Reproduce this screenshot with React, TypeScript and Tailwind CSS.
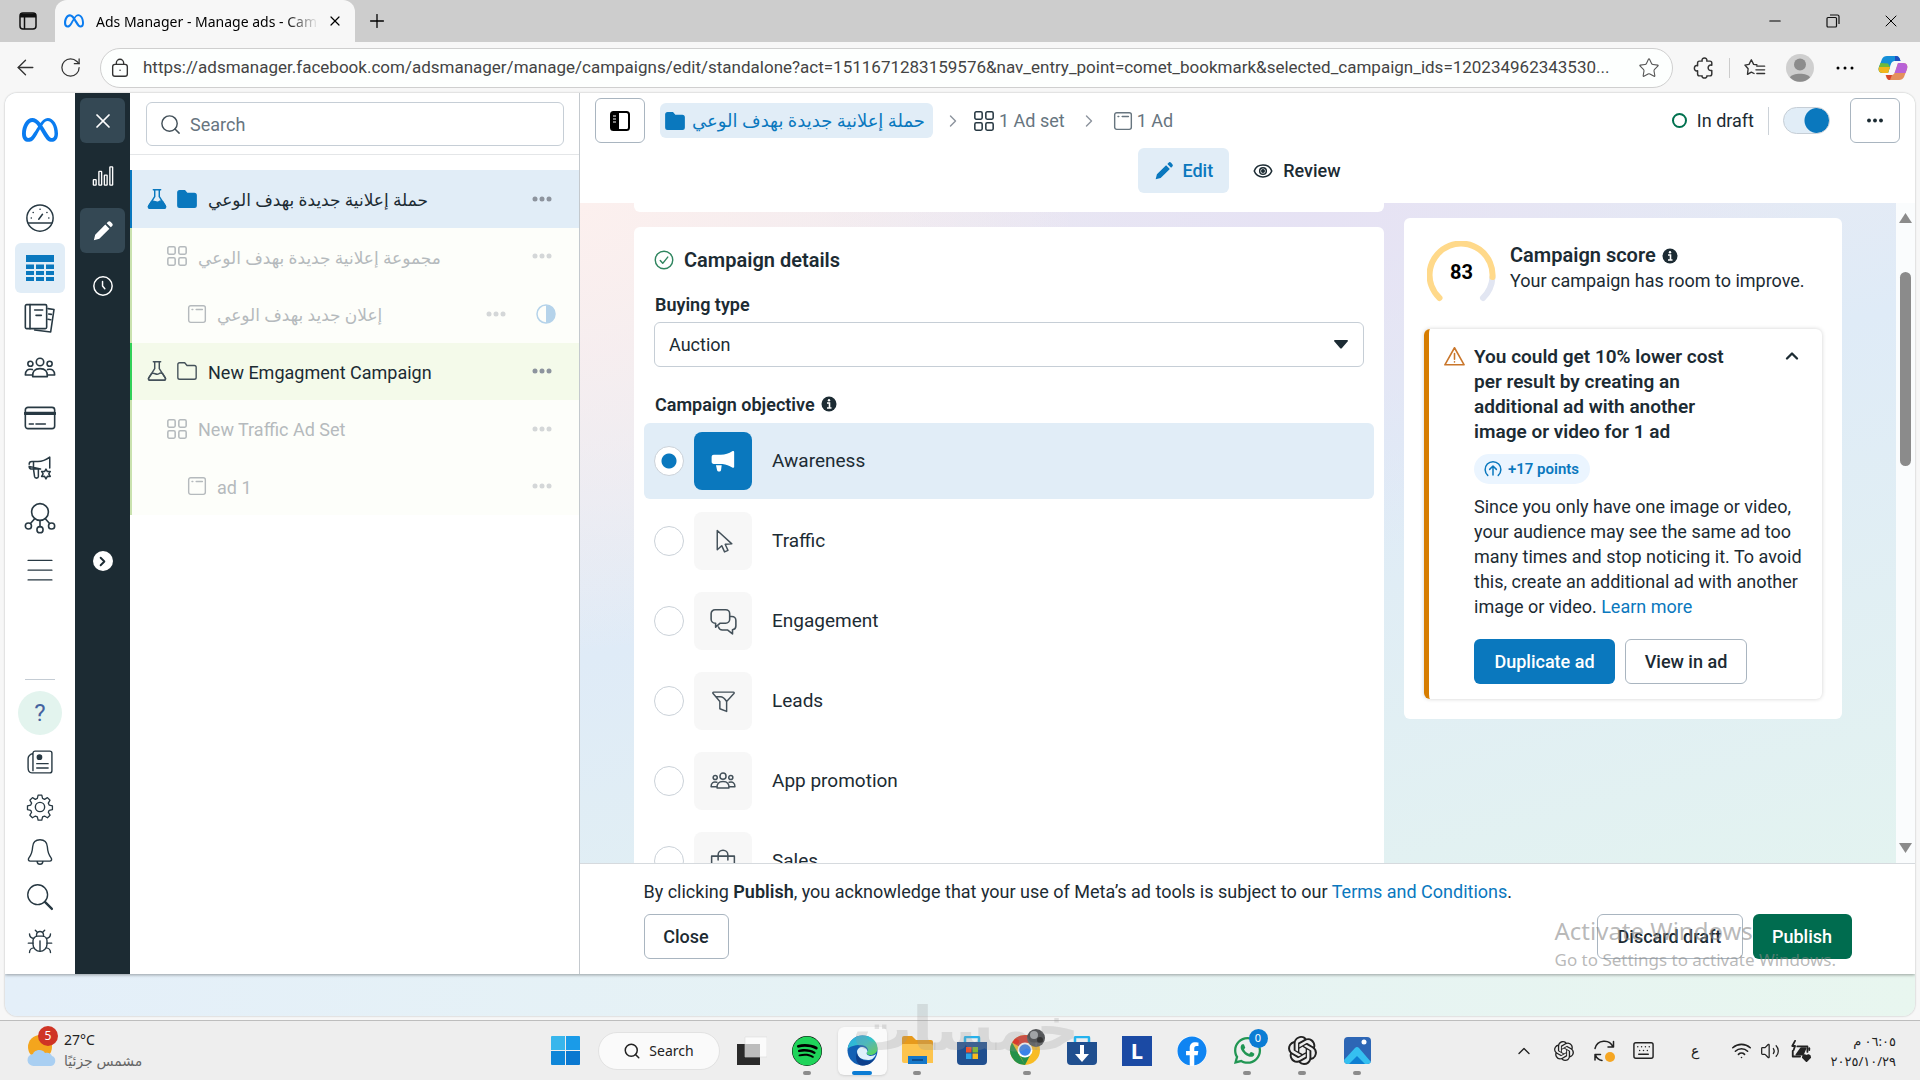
import type { ReactNode } from "react";
import { FaFacebook, FaSpotify, FaWhatsapp } from "react-icons/fa";
import { FaMeta } from "react-icons/fa6";
import { SiOpenai } from "react-icons/si";
import {
    ArrowLeft, Bug, ChevronRight, ChevronUp, Keyboard, Minus, Plus, RotateCw,
    Search, Star, Volume2, Wifi, X,
} from "lucide-react";

const appFont = "font-[Roboto,'DejaVu_Sans',sans-serif]";
const uiFont = "font-['Noto_Sans','DejaVu_Sans',sans-serif]";

function Line({ size = 24, width = 1.3, className = "", children }: { size?: number; width?: number; className?: string; children: ReactNode }) {
    return (
        <svg width={size} height={size} viewBox="0 0 24 24" fill="none" stroke="currentColor" strokeWidth={width} strokeLinecap="round" strokeLinejoin="round" className={`shrink-0 ${className}`} aria-hidden="true">
            {children}
        </svg>
    );
}

function Dots({ className = "" }: { className?: string }) {
    return (
        <svg width="20" height="6" viewBox="0 0 20 6" fill="currentColor" className={`shrink-0 ${className}`} aria-hidden="true">
            <circle cx="3" cy="3" r="2.5" />
            <circle cx="10" cy="3" r="2.5" />
            <circle cx="17" cy="3" r="2.5" />
        </svg>
    );
}

function PeopleIcon({ size, width }: { size: number; width?: number }) {
    return (
        <Line size={size} width={width}>
            <circle cx="12" cy="7.5" r="2.8" />
            <circle cx="4.8" cy="8.8" r="1.9" />
            <circle cx="19.2" cy="8.8" r="1.9" />
            <path d="M6.5 18.5c-.4-3.800 1.500-6 5.500-6s5.900 2.200 5.500 6z" />
            <path d="M6.300 13.200C3 12.300 1 13.800 1 17.300h5" />
            <path d="M17.700 13.200c3.300-.9 5.300.6 5.300 4.100h-5" />
        </Line>
    );
}

function GridIcon({ className = "" }: { className?: string }) {
    return (
        <Line size={22} width={1.7} className={className}>
            <rect x="2" y="2" width="8" height="8" rx="1.5" />
            <rect x="14" y="2" width="8" height="8" rx="1.5" />
            <rect x="2" y="14" width="8" height="8" rx="1.5" />
            <rect x="14" y="14" width="8" height="8" rx="1.5" />
        </Line>
    );
}

function AdIcon({ className = "" }: { className?: string }) {
    return (
        <Line size={20} width={1.7} className={className}>
            <rect x="2" y="2" width="20" height="20" rx="2.500" />
            <path d="M6 6.500h1M11 6.500h7.500" />
        </Line>
    );
}

function FolderIcon({ filled = false, className = "" }: { filled?: boolean; className?: string }) {
    return (
        <Line size={22} width={1.5} className={className}>
            <path d="M2 5a2 2 0 0 1 2-2h5.500l2.500 3h8a2 2 0 0 1 2 2v11a2 2 0 0 1-2 2H4a2 2 0 0 1-2-2z" fill={filled ? "currentColor" : "none"} />
        </Line>
    );
}

function FlaskIcon({ filled = false }: { filled?: boolean }) {
    return (
        <Line size={22} width={1.600}>
            <path d="M8 2h8M9.500 2v7.500L3 19.500c-.8 1.500 0 2.500 1.500 2.500h15c1.500 0 2.300-1 1.500-2.500L14.500 9.500V2" />
            <path d="M6 15c3-2 5 2 8 0 1.500-1 3-.8 4.200 0l2.800 4.500c.8 1.500 0 2.500-1.500 2.500h-15C3 22 2.200 21 3 19.500z" fill={filled ? "currentColor" : "none"} />
        </Line>
    );
}

function PencilIcon({ size = 22 }: { size?: number }) {
    return (
        <svg width={size} height={size} viewBox="0 0 24 24" fill="currentColor" aria-hidden="true">
            <path d="M2 22l1.500-6L14.500 5l4.500 4.500L8 20.500zM16 3.500l1.500-1.500c1-1 2-.8 3 .2l1.300 1.300c1 1 1.200 2 .2 3L20.500 8z" />
        </svg>
    );
}

function MegaphoneIcon() {
    return (
        <svg width="26" height="26" viewBox="0 0 24 24" fill="currentColor" aria-hidden="true">
            <path d="M1.500 8.500C1.500 7 2.300 6.300 3.500 6.300H10c4 0 7.500-1.300 10.500-3.300.9-.6 1.800-.2 1.800.8v13.400c0 1-.9 1.400-1.800.8-2.700-1.800-5.700-3-9-3.300v.1H3.500c-1.200 0-2-.8-2-2zM5.500 16h5.300l-.6 4.200c-.2 1-.9 1.600-1.800 1.600s-1.700-.6-1.900-1.600z" />
        </svg>
    );
}

function InfoIcon() {
    return (
        <svg width="16" height="16" viewBox="0 0 16 16" className="text-[#1c2b33]" aria-hidden="true">
            <circle cx="8" cy="8" r="7.500" fill="currentColor" />
            <path d="M6 7h2.500v5M6 12h4.500" stroke="#fff" strokeWidth="1.600" fill="none" />
            <circle cx="8" cy="4.200" r="1.200" fill="#fff" />
        </svg>
    );
}

function BrowserBar() {
    return (
        <header className={`bg-[#cdcdcd] ${uiFont}`}>
            <div className="flex h-[42px] items-stretch">
                <div className="flex w-[55px] items-center justify-center bg-[#cdcdcd]">
                    <svg width="20" height="20" viewBox="0 0 20 20" fill="none" stroke="#111" strokeWidth="1.500" aria-hidden="true">
                        <rect x="2" y="2" width="16" height="16" rx="3" />
                        <path d="M2 4.500h16" strokeWidth="4" />
                        <path d="M6.500 5v13" />
                    </svg>
                </div>
                <div className="flex w-[300px] items-center rounded-t-xl bg-[#f7f7f7] pl-2 pr-3">
                    <FaMeta className="ml-px mr-1 size-5 shrink-0 text-[#0a7cf0]" />
                    <span className="ml-2 min-w-0 flex-1 overflow-hidden whitespace-nowrap bg-gradient-to-r from-black from-85% to-transparent bg-clip-text text-[14px] text-transparent">Ads Manager - Manage ads - Cam</span>
                    <button aria-label="Close tab" className="ml-2"><X size={16} strokeWidth={1.8} /></button>
                </div>
                <button aria-label="New tab" className="px-[11px]"><Plus size={22} strokeWidth={1.4} /></button>
                <div className="ml-auto flex items-center">
                    <button aria-label="Minimize" className="flex w-[58px] justify-center"><Minus size={18} strokeWidth={1.4} /></button>
                    <button aria-label="Restore" className="flex w-[58px] justify-center">
                        <svg width="14" height="14" viewBox="0 0 14 14" fill="none" stroke="#111" strokeWidth="1.200" aria-hidden="true">
                            <rect x="1" y="3.500" width="9.500" height="9.500" rx="1" />
                            <path d="M4 1h7.500a1.500 1.500 0 0 1 1.500 1.500V10" />
                        </svg>
                    </button>
                    <button aria-label="Close" className="flex w-[58px] justify-center"><X size={20} strokeWidth={1.2} /></button>
                </div>
            </div>
            <div className="flex h-[51px] items-center bg-[#f7f7f7] text-[#333]">
                <button aria-label="Back" className="flex w-[50px] justify-center"><ArrowLeft size={25} strokeWidth={1.3} /></button>
                <button aria-label="Refresh" className="ml-1 mr-[14px] flex w-8 justify-center"><RotateCw size={23} strokeWidth={1.3} /></button>
                <div className="flex h-10 min-w-0 flex-1 items-center rounded-full border border-[#cfcfcf] bg-[#fdfffe] pl-2 pr-3">
                    <Line size={22} width={1.500}>
                        <rect x="4" y="8" width="16" height="13" rx="2.500" />
                        <path d="M8 8V6.500a4 4 0 0 1 8 0V8M12 14.500h.1" />
                    </Line>
                    <input aria-label="Address" readOnly value="https://adsmanager.facebook.com/adsmanager/manage/campaigns/edit/standalone?act=1511671283159576&nav_entry_point=comet_bookmark&selected_campaign_ids=120234962343530..." className="ml-3 min-w-0 flex-1 bg-transparent font-[Roboto,sans-serif] text-[17px] text-[#444] outline-none" />
                    <Star size={22} strokeWidth={1.2} className="ml-2 shrink-0 text-[#555]" />
                </div>
                <button aria-label="Extensions" className="ml-5">
                    <Line size={22} width={1.600}>
                        <path d="M7 4.500h3c-.8-2.500 1-3.500 2.500-3.500s3.300 1 2.500 3.500h3.500a2 2 0 0 1 2 2V9c-2.500-.8-4 .8-4 2.800s1.500 3.500 4 2.800v4a2 2 0 0 1-2 2H15c.8 1-1 2.400-2.500 2.400s-3.300-1.400-2.500-2.400H7a2 2 0 0 1-2-2V15c-2.500.8-3.500-1.200-3.500-2.800S2.500 8.700 5 9.500v-3a2 2 0 0 1 2-2z" />
                    </Line>
                </button>
                <span className="ml-[14px] h-5 w-px bg-[#ccc]" />
                <button aria-label="Favorites" className="ml-[14px]">
                    <Line size={22} width={1.500}>
                        <path d="M14 8.500 10.500 8 8 3 5.500 8 1 8.800l3.500 4L3.800 19 8 16.500l3 1.500M14 10h8.500M13 14h9.500M14 18h8.500" />
                    </Line>
                </button>
                <svg width="28" height="28" viewBox="0 0 28 28" className="ml-5" aria-label="Profile">
                    <circle cx="14" cy="14" r="14" fill="#cfcfcf" />
                    <circle cx="14" cy="10.500" r="6" fill="#8c8c8c" />
                    <path d="M4 23.500c2-5 18-5 20 0a14 14 0 0 1-20 0z" fill="#8c8c8c" />
                </svg>
                <button aria-label="Settings and more" className="ml-[22px]"><svg width="18" height="4" viewBox="0 0 18 4" aria-hidden="true"><circle cx="2" cy="2" r="1.500" /><circle cx="9" cy="2" r="1.500" /><circle cx="16" cy="2" r="1.500" /></svg></button>
                <button aria-label="Copilot" className="ml-6 mr-3">
                    <svg width="30" height="28" viewBox="0 0 30 28" aria-hidden="true">
                        <path d="M9 2h9c3 0 3.500 2 4.500 5H17c-3 0-4 2-5 6l-2 6H5c-4 0-5-3-4-6L4 5c1-2 2.500-3 5-3z" fill="#158fd8" />
                        <path d="M2.500 9 10 9.500 12 13l-2 6H5c-4 0-5-3-4-6z" fill="#6fb93c" />
                        <path d="M1.200 13H12l-2 6H5c-4 0-5-3-3.800-6z" fill="#f1b51c" />
                        <path d="M17 2c3 0 4.500 1 5.500 5H17z" fill="#1f4fc0" />
                        <path d="M21 26h-9c-3 0-3.500-2-4.500-5H13c3 0 4-2 5-6l2-6h5c4 0 5 3 4 6l-3 8c-1 2-2.500 3-5 3z" fill="#e4905d" />
                        <path d="M20 9h5c4 0 5 3 4 6l-1.500 4H16.500L18 15z" fill="#b862d6" />
                        <path d="M8 21h6l-2 5c-2.500 0-3-1.500-4-5z" fill="#d8452c" />
                    </svg>
                </button>
            </div>
        </header>
    );
}

function NavButton({ label, active = false, children }: { label: string; active?: boolean; children: ReactNode }) {
    return (
        <button aria-label={label} className={`flex h-[50px] w-[50px] shrink-0 items-center justify-center rounded-md ${active ? "bg-[#e1edf7] text-[#0a78be]" : ""}`}>
            {children}
        </button>
    );
}

function ProductNav() {
    return (
        <nav className="flex w-[70px] shrink-0 flex-col items-center bg-white text-[#283943]">
            <FaMeta className="mt-[19px] size-9 text-[#0a7cf0]" />
            <div className="mt-[45px] flex flex-col items-center">
                <NavButton label="Account overview">
                    <Line size={30} width={1.200}>
                        <circle cx="12" cy="12" r="10.500" />
                        <path d="M2.500 16h19M11 13l3-4M5 12h.1M6.500 7.500h.1M12 5h.1M17.500 7.500h.1M19 12h.1" />
                    </Line>
                </NavButton>
                <NavButton label="Campaigns" active>
                    <svg width="28" height="28" viewBox="0 0 28 28" fill="currentColor" aria-hidden="true">
                        <path d="M0 1h28v7H0zM0 10.500h8v4.500H0zM10 10.500h8v4.500h-8zM20 10.500h8v4.500h-8zM0 17h8v4H0zM10 17h8v4h-8zM20 17h8v4h-8zM0 23h8v4H0zM10 23h8v4h-8zM20 23h8v4h-8z" />
                    </svg>
                </NavButton>
                <NavButton label="Ads reporting">
                    <Line size={32} width={1.200}>
                        <rect x="1" y="2" width="16" height="18" rx="1" />
                        <path d="M4.500 2v18M8 6h6M9 10h4M18 5l4.500.6L20 22.500 8 21M18.500 9l2 .3M18 13l2 .3" />
                    </Line>
                </NavButton>
                <NavButton label="Audiences"><PeopleIcon size={32} width={1.200} /></NavButton>
                <NavButton label="Billing & payments">
                    <Line size={32} width={1.200}>
                        <rect x="1" y="4" width="22" height="16" rx="2" />
                        <path d="M1 8.500h22" strokeWidth="2.500" />
                        <path d="M4 16.500h3M9 16.500h7" />
                    </Line>
                </NavButton>
                <NavButton label="Advertising settings">
                    <Line size={26} width={1.400}>
                        <path d="M2 8.500C2 7 3 6 4.500 6H10c4 0 7-1 11-4v10M12.500 13h-8C3 13 2 12 2 10.500zM6 6v7l1 7c.3 1.800 3.300 1.800 3.500 0v-7" />
                        <path d="m17.500 13 1.300 2.300 2.700-.1-1.400 2.300 1.400 2.300-2.700-.1-1.300 2.300-1.300-2.300-2.700.1 1.400-2.300-1.400-2.300 2.700.1z" />
                    </Line>
                </NavButton>
                <NavButton label="Events manager">
                    <Line size={32} width={1.200}>
                        <circle cx="12" cy="7.500" r="6.300" />
                        <circle cx="3.300" cy="18" r="2.300" />
                        <circle cx="12" cy="20.800" r="2.300" />
                        <circle cx="20.700" cy="18" r="2.300" />
                        <path d="M8 12.500 5 16M16 12.500l3 3.500M12 14v4.500" />
                    </Line>
                </NavButton>
                <NavButton label="All tools">
                    <Line size={26} width={1.200}><path d="M1 5h22M1 14h22M1 23h22" /></Line>
                </NavButton>
            </div>
            <div className="mb-2.5 mt-auto flex flex-col items-center">
                <span className="mb-[11px] h-px w-[30px] bg-[#c4ccd4]" />
                <button aria-label="Help" className="mb-1 flex size-11 items-center justify-center rounded-full bg-[#e3f4ee] text-2xl text-[#4563a0]">?</button>
                <button aria-label="News" className="flex h-[45px] w-11 items-center justify-center">
                    <Line size={26} width={1.300}>
                        <path d="M5.500 4a2 2 0 0 1 2-2H21a2 2 0 0 1 2 2v16a2 2 0 0 1-2 2H4.500C2 22 1 20 1 17V9c0-2 1.500-4 4.500-5zM5.500 4v16" />
                        <circle cx="11.500" cy="7.500" r="2" fill="currentColor" />
                        <path d="M9 13.500h10.500M9 17.500h10.500" />
                    </Line>
                </button>
                <button aria-label="Settings" className="flex h-[45px] w-11 items-center justify-center">
                    <Line size={28} width={1.200}>
                        <circle cx="12" cy="12" r="4" />
                        <path d="M10.300 1.500h3.400l.7 3 1.800.8 2.700-1.600 2.400 2.400-1.600 2.700.8 1.800 3 .7v3.400l-3 .7-.8 1.800 1.600 2.700-2.400 2.400-2.700-1.600-1.800.8-.7 3h-3.400l-.7-3-1.800-.8-2.700 1.600-2.400-2.400 1.600-2.700-.8-1.800-3-.7v-3.400l3-.7.8-1.800-1.600-2.700 2.400-2.400 2.700 1.600 1.800-.8z" transform="translate(.8 .5) scale(.93)" />
                    </Line>
                </button>
                <button aria-label="Notifications" className="flex h-[45px] w-11 items-center justify-center">
                    <Line size={28} width={1.200}>
                        <path d="M12 1.500c-3.500 0-6 2.300-6.300 6-.3 5.500-1.200 7-3.200 9.500-1 1.500-.3 2.800 1.200 2.800h16.600c1.500 0 2.200-1.300 1.200-2.800-2-2.500-2.900-4-3.200-9.500-.3-3.700-2.800-6-6.300-6zM9.500 20c.3 3.300 4.700 3.300 5 0" />
                    </Line>
                </button>
                <button aria-label="Search" className="flex h-[45px] w-11 items-center justify-center">
                    <Line size={28} width={1.200}><circle cx="10" cy="10" r="8.500" /><path d="m16.200 16.200 6 6" strokeWidth="2" /></Line>
                </button>
                <button aria-label="Report a problem" className="flex h-[45px] w-11 items-center justify-center"><Bug size={28} strokeWidth={1.2} /></button>
            </div>
        </nav>
    );
}

function DarkRail() {
    return (
        <div className="flex w-[55px] shrink-0 flex-col items-center bg-[#1c2b33] pt-[5px] text-white">
            <button aria-label="Close editor" className="flex size-[45px] items-center justify-center rounded-md bg-[#344854]"><X size={24} strokeWidth={1.7} /></button>
            <button aria-label="Charts" className="mt-2.5 flex size-[45px] items-center justify-center">
                <Line size={22} width={1.500}>
                    <rect x="1.500" y="16" width="3" height="6" rx=".5" />
                    <rect x="7.500" y="7" width="3" height="15" rx=".5" />
                    <rect x="13.500" y="11" width="3" height="11" rx=".5" />
                    <rect x="19.500" y="2" width="3" height="20" rx=".5" />
                </Line>
            </button>
            <button aria-label="Edit" className="mt-2.5 flex size-[45px] items-center justify-center rounded-md bg-[#344854]"><PencilIcon /></button>
            <button aria-label="History" className="mt-2.5 flex size-[45px] items-center justify-center">
                <Line size={22} width={1.600}><circle cx="12" cy="12" r="10" /><path d="M11.500 7v5l2.500 3" /></Line>
            </button>
            <button aria-label="Expand" className="mt-[243px] flex size-5 items-center justify-center rounded-full bg-white text-[#1c2b33]"><ChevronRight size={15} strokeWidth={3} /></button>
        </div>
    );
}

const tree = [
    { name: "حملة إعلانية جديدة بهدف الوعي", row: "border-[#0a78be] bg-[#e1edf7] pl-[14px] text-[#1c2b33]", icon: <><FlaskIcon filled /><FolderIcon filled className="ml-2" /></>, iconColor: "text-[#0a78be]", dots: "text-[#8d949e]", half: false, rtl: true },
    { name: "مجموعة إعلانية جديدة بهدف الوعي", row: "border-[#c9e2ae] bg-[#fdfefa] pl-[34px] text-[#b5babd]", icon: <GridIcon />, iconColor: "text-[#b5babd]", dots: "text-[#d4d7d8]", half: false, rtl: true },
    { name: "إعلان جديد بهدف الوعي", row: "border-[#c9e2ae] bg-[#fdfefa] pl-[55px] text-[#b5babd]", icon: <AdIcon />, iconColor: "text-[#b5babd]", dots: "text-[#d4d7d8]", half: true, rtl: true },
    { name: "New Emgagment Campaign", row: "border-[#31d158] bg-[#f4faea] pl-[14px] text-[#1c2b33]", icon: <><FlaskIcon /><FolderIcon className="ml-2" /></>, iconColor: "text-[#44515a]", dots: "text-[#8d949e]", half: false, rtl: false },
    { name: "New Traffic Ad Set", row: "border-[#c9e2ae] bg-[#fdfefa] pl-[34px] text-[#b5babd]", icon: <GridIcon />, iconColor: "text-[#b5babd]", dots: "text-[#d4d7d8]", half: false, rtl: false },
    { name: "ad 1", row: "border-[#c9e2ae] bg-[#fdfefa] pl-[55px] text-[#b5babd]", icon: <AdIcon />, iconColor: "text-[#b5babd]", dots: "text-[#d4d7d8]", half: false, rtl: false },
];

function CampaignTree() {
    return (
        <aside className="w-[450px] shrink-0 border-r border-[#c4c9ce] bg-white">
            <div className="border-b border-[#e4e6e8] pb-2 pl-4 pr-[15px] pt-[9px]">
                <label className="flex h-11 items-center gap-2 rounded-md border border-[#c6ced6] px-3">
                    <Search size={23} strokeWidth={1.5} className="text-[#44515a]" />
                    <input type="search" placeholder="Search" aria-label="Search" className="min-w-0 flex-1 text-[18px] outline-none placeholder:text-[#67757f]" />
                </label>
            </div>
            <ul className="mt-[15px] grid h-[345px] grid-rows-6">
                {tree.map((item) => (
                    <li key={item.name} className={`flex items-center border-l-2 pr-[27px] ${item.row}`}>
                        <span className={`flex items-center ${item.iconColor}`}>{item.icon}</span>
                        <span dir={item.rtl ? "rtl" : "ltr"} className={`ml-2.5 whitespace-nowrap ${item.rtl ? "pt-1 text-[17px]" : "pt-0.5 text-[18px]"}`}>{item.name}</span>
                        <button aria-label="More options" className={`ml-auto ${item.dots}`}><Dots /></button>
                        {item.half && (
                            <svg width="20" height="20" viewBox="0 0 20 20" className="-mr-1 ml-[30px] text-[#b5d3ea]" aria-hidden="true">
                                <circle cx="10" cy="10" r="9" fill="none" stroke="currentColor" strokeWidth="1.500" />
                                <path d="M10 1a9 9 0 0 1 0 18z" fill="currentColor" />
                            </svg>
                        )}
                    </li>
                ))}
            </ul>
        </aside>
    );
}

function EditorHeader() {
    return (
        <header className="h-[110px] shrink-0 bg-white pl-[15px] pr-[15px] pt-[5px]">
            <div className="flex h-[45px] items-center text-[18px]">
                <button aria-label="Toggle panel" className="flex h-[45px] w-[50px] items-center justify-center rounded-md border border-[#a9b5c0]">
                    <svg width="20" height="20" viewBox="0 0 20 20" fill="none" aria-hidden="true">
                        <rect x="1" y="1" width="18" height="18" rx="2.500" stroke="#000" strokeWidth="2" />
                        <path d="M1 2h8v16H1z" fill="#000" />
                        <path d="M3 5h3M3 8h3M3 11h3" stroke="#fff" />
                    </svg>
                </button>
                <a href="#campaign" className="ml-[15px] flex h-[35px] items-center gap-1.5 rounded-md bg-[#e1edf7] pl-1 pr-2 text-[#0a78be]">
                    <FolderIcon filled />
                    <span dir="rtl" className="whitespace-nowrap">حملة إعلانية جديدة بهدف الوعي</span>
                </a>
                <ChevronRight size={20} strokeWidth={1.7} className="mx-2.5 text-[#8d949e]" />
                <a href="#adset" className="flex items-center gap-1 text-[#67757f]"><GridIcon className="text-[#283943]" />1 Ad set</a>
                <ChevronRight size={20} strokeWidth={1.7} className="mx-[14px] text-[#8d949e]" />
                <a href="#ad" className="flex items-center gap-1 text-[#67757f]"><AdIcon />1 Ad</a>
                <span className="ml-auto flex items-center gap-2.5 text-[#1c2b33]">
                    <span className="size-[15px] rounded-full border-2 border-[#00714f]" />
                    In draft
                </span>
                <span className="mx-[14px] h-7 w-px bg-[#ccd2d8]" />
                <input type="checkbox" role="switch" defaultChecked aria-label="Campaign on" className="h-[27px] w-[47px] appearance-none rounded-full border border-[#c6ced6] bg-[#e1edf7] bg-[radial-gradient(circle_12px_at_33px_50%,#0a78be_12px,transparent_13px)]" />
                <button aria-label="More options" className="ml-5 flex h-[45px] w-[50px] items-center justify-center rounded-md border border-[#a9b5c0] text-[#1c2b33]">
                    <svg width="18" height="5" viewBox="0 0 18 5" fill="currentColor" aria-hidden="true"><circle cx="3" cy="2.500" r="1.900" /><circle cx="9" cy="2.500" r="1.900" /><circle cx="15" cy="2.500" r="1.900" /></svg>
                </button>
            </div>
            <div className="mt-[5px] flex justify-center gap-2 text-[18px] font-medium">
                <button className="flex h-[45px] items-center gap-2 rounded-md bg-[#e1edf7] px-4 text-[#0a78be]"><PencilIcon size={20} />Edit</button>
                <button className="flex h-[45px] items-center gap-2.5 px-4 text-[#1c2b33]">
                    <Line size={20} width={1.800}>
                        <path d="M1.500 12C5 2.500 19 2.500 22.500 12 19 21.500 5 21.500 1.500 12z" />
                        <circle cx="12" cy="12" r="4" />
                        <circle cx="12" cy="12" r="1.500" fill="currentColor" />
                    </Line>
                    Review
                </button>
            </div>
        </header>
    );
}

const objectives = [
    { name: "Awareness", icon: <MegaphoneIcon /> },
    { name: "Traffic", icon: <Line size={25} width={1.400}><path d="M6 1.500v18.500l4.300-4 2.700 6 3.300-1.500-2.700-5.800 6.400-.4z" /></Line> },
    { name: "Engagement", icon: <Line size={27} width={1.400}><path d="M4.500 1.500h9.500a3.500 3.500 0 0 1 3.500 3.500v5a3.500 3.500 0 0 1-3.500 3.500H9L5 17v-3.500h-.5A3.500 3.500 0 0 1 1 10V5a3.500 3.500 0 0 1 3.500-3.500zM17.500 7.500h2A3.500 3.500 0 0 1 23 11v5a3.500 3.500 0 0 1-3 3.400V23l-4.500-3.500H11c-2 0-3-1-3.400-2.500" /></Line> },
    { name: "Leads", icon: <Line size={25} width={1.400}><path d="M2.500 3h19c.8 0 1 .8.500 1.400L15 12v9.500L8.500 19v-7L2 4.400C1.500 3.800 1.700 3 2.500 3zM5 7.500h4c2 0 4 1.500 6 4.500" /></Line> },
    { name: "App promotion", icon: <PeopleIcon size={26} width={1.400} /> },
    { name: "Sales", icon: <Line size={26} width={1.400}><path d="M1.500 7.500h21V21a1.500 1.500 0 0 1-1.500 1.500H3A1.500 1.500 0 0 1 1.500 21zM7.500 11V6.500a4.500 4.500 0 0 1 9 0V11" /></Line> },
];

function DetailsCard() {
    return (
        <section className="rounded-md bg-white pb-6 pl-5 pr-5 pt-[18px] text-[18px] text-[#1c2b33]">
            <h2 className="flex h-[30px] items-center gap-2.5 text-[20px] font-semibold">
                <Line size={20} width={1.700} className="text-[#2f855f]"><circle cx="12" cy="12" r="10.500" /><path d="m7.500 12.500 3 3.500 6-7.500" /></Line>
                Campaign details
            </h2>
            <label htmlFor="buying-type" className="mt-[14px] flex h-[30px] items-center px-px font-semibold">Buying type</label>
            <div className="mt-[3px] grid items-center">
                <select id="buying-type" className="col-start-1 row-start-1 h-[45px] appearance-none rounded-md border border-[#c6ced6] bg-white px-[14px]">
                    <option>Auction</option>
                </select>
                <svg width="14" height="9" viewBox="0 0 14 9" className="pointer-events-none col-start-1 row-start-1 mr-4 justify-self-end" aria-hidden="true"><path d="M1 0h12c1 0 1.300.8.6 1.500L8 8c-.6.800-1.400.800-2 0L.4 1.500C-.3.800 0 0 1 0z" fill="#1c2b33" /></svg>
            </div>
            <fieldset className="-mx-2.5 mt-[22px]">
                <legend className="flex h-[30px] items-center gap-1.5 px-[11px] font-semibold">Campaign objective <InfoIcon /></legend>
                <div className="mt-1 flex flex-col gap-1">
                    {objectives.map((item, i) => (
                        <label key={item.name} className={`flex h-[76px] items-center rounded-md pl-2.5 text-[19px] ${i === 0 ? "bg-[#e1edf7]" : ""}`}>
                            <input type="radio" name="objective" defaultChecked={i === 0} className="size-[30px] appearance-none rounded-full border border-[#cbd2d9] bg-white checked:bg-[radial-gradient(circle,#0a78be_7px,transparent_8px)]" />
                            <span className={`ml-2.5 flex size-[58px] items-center justify-center rounded-lg ${i === 0 ? "bg-[#0a78be] text-white" : "bg-[#f7f7f7] text-[#44515a]"}`}>{item.icon}</span>
                            <span className="ml-5">{item.name}</span>
                        </label>
                    ))}
                </div>
            </fieldset>
        </section>
    );
}

function ScoreCard() {
    return (
        <aside className="mt-[15px] w-[438px] shrink-0 self-start rounded-md bg-white p-5 text-[18px] text-[#1c2b33]">
            <div className="flex pl-[3px] pt-[3px]">
                <svg width="69" height="69" viewBox="0 0 69 69" fill="none" strokeWidth="6" strokeLinecap="round" aria-hidden="true">
                    <path d="M65.500 36A31.500 31.500 0 0 1 56 57" stroke="#e2e6f2" />
                    <path d="M12.500 57A31.500 31.500 0 1 1 65.500 36" stroke="#ffd98a" />
                    <text x="34.500" y="38" textAnchor="middle" fontSize="20" fontWeight="700" fill="#000">83</text>
                </svg>
                <div className="ml-[14px] leading-[25px]">
                    <h2 className="mt-0.5 flex items-center gap-1.5 text-[20px] font-semibold">Campaign score <InfoIcon /></h2>
                    <p className="whitespace-nowrap">Your campaign has room to improve.</p>
                </div>
            </div>
            <div className="mt-[19px] flex rounded-md border-l-[5px] border-[#d67c00] pb-[15px] pl-[15px] pr-3 pt-[15px] shadow-[0_0_4px_rgba(0,0,0,0.18)]">
                <Line size={21} width={1.700} className="mt-0.5 text-[#c9762b]"><path d="M12 2 1 21.500h22zM12 8.500v6.500M12 18v.2" strokeWidth="1.800" /></Line>
                <div className="ml-[9px] leading-[25px]">
                    <div className="flex justify-between pr-2">
                        <h3 className="w-[270px] text-[19px] font-semibold">You could get 10% lower cost per result by creating an additional ad with another image or video for 1 ad</h3>
                        <button aria-label="Collapse" className="mt-0.5 h-5"><ChevronUp size={20} strokeWidth={2.800} /></button>
                    </div>
                    <div className="mt-[10px] flex h-[30px] w-[116px] items-center gap-1.5 rounded-full bg-[#ebf5ff] pl-2.5 text-[15px] font-semibold text-[#0a78be]">
                        <Line size={18} width={2}><path d="M5 20.500a10.500 10.500 0 1 1 14 0M12 20V8M7.500 12.500 12 8l4.500 4.500" /></Line>
                        +17 points
                    </div>
                    <p className="mt-2.5">Since you only have one image or video, your audience may see the same ad too many times and stop noticing it. To avoid this, create an additional ad with another image or video. <a href="#learn" className="text-[#0a78be]">Learn more</a></p>
                    <div className="mt-5 flex gap-2.5 font-medium">
                        <button className="h-[45px] w-[141px] rounded-md bg-[#0a78be] text-white">Duplicate ad</button>
                        <button className="h-[45px] w-[122px] rounded-md border border-[#a9b5c0] bg-white">View in ad</button>
                    </div>
                </div>
            </div>
        </aside>
    );
}

function EditorFooter() {
    return (
        <footer className="h-[111px] shrink-0 border-t border-[#d6dade] bg-white px-5 pt-[15px] text-[18px] text-[#1c2b33]">
            <div className="mx-auto max-w-[1208px]">
                <p className="h-[25px] leading-[25px]">By clicking <b className="font-semibold">Publish</b>, you acknowledge that your use of Meta’s ad tools is subject to our <a href="#terms" className="text-[#0a78be]">Terms and Conditions</a>.</p>
                <div className="mt-2.5 flex gap-2.5 font-medium">
                    <button className="h-[45px] w-[85px] rounded-md border border-[#a9b5c0]">Close</button>
                    <div className="relative ml-auto">
                        <button className="h-[45px] w-[146px] rounded-md border border-[#a9b5c0]">Discard draft</button>
                        <div className={`pointer-events-none absolute -left-[42px] top-px z-10 whitespace-nowrap font-normal text-[#8a8a8a]/60 ${uiFont}`}>
                            <p className="text-[24px] leading-[32px]">Activate Windows</p>
                            <p className="text-[17px] leading-[26px]">Go to Settings to activate Windows.</p>
                        </div>
                    </div>
                    <button className="h-[45px] w-[99px] rounded-md bg-[#006c4f] text-white">Publish</button>
                </div>
            </div>
        </footer>
    );
}

function TaskbarApp({ label, dot = false, active = false, children }: { label: string; dot?: boolean; active?: boolean; children: ReactNode }) {
    return (
        <button aria-label={label} className={`relative flex h-12 w-[49px] items-center justify-center rounded-md ${active ? "bg-[#fafafa] shadow-sm" : ""}`}>
            {children}
            {(dot || active) && <span className={`absolute bottom-0 h-1 rounded-full ${active ? "w-5 bg-[#0b7cd4]" : "w-2 bg-[#8b8b8b]"}`} />}
        </button>
    );
}

function Taskbar() {
    return (
        <footer className={`relative flex h-[60px] shrink-0 items-center border-t border-[#bdbdbd] bg-[#eee] text-[#222] ${uiFont}`}>
            <div className="flex flex-1 items-center pl-[26px]">
                <div className="relative">
                    <svg width="32" height="34" viewBox="0 0 32 34" aria-hidden="true">
                        <circle cx="14" cy="13" r="12" fill="#f4a51d" />
                        <path d="M8 32a6 6 0 0 1-1-12c1-4 9-6 12-1 4-1 6 1 7 3 5 1 4 10-1 10z" fill="#a9cff2" />
                    </svg>
                    <span className="absolute -top-2 left-3 flex size-5 items-center justify-center rounded-full bg-[#cf3425] text-[12px] text-white">5</span>
                </div>
                <div className="mb-0.5 ml-1.5 text-[14px] leading-[21px]">
                    <p>27°C</p>
                    <p dir="rtl" className="text-[#666]">مشمس جزئيًا</p>
                </div>
            </div>
            <div className="flex items-center gap-1.5 pl-2.5">
                <button aria-label="Start" className="mr-3">
                    <svg width="29" height="29" viewBox="0 0 29 29" aria-hidden="true">
                        <path d="M0 1q0-1 1-1h13v14H0z" fill="#38b6ec" />
                        <path d="M15 0h13q1 0 1 1v13H15z" fill="#1a9be8" />
                        <path d="M0 15h14v14H1q-1 0-1-1z" fill="#0f86d8" />
                        <path d="M15 15h14v13q0 1-1 1H15z" fill="#0a78d0" />
                    </svg>
                </button>
                <button className="mr-0.5 flex h-[38px] w-[122px] items-center justify-center gap-2 rounded-full border border-[#e2e2e2] bg-[#fafafa] text-[14px]"><Search size={18} strokeWidth={2} />Search</button>
                <TaskbarApp label="Task view">
                    <svg width="30" height="30" viewBox="0 0 30 30" aria-hidden="true"><path d="M0 8h23v21H0z" fill="#2a2a2a" /><path d="M8 1h22v20H8z" fill="#fbfbfb" stroke="#dcdcdc" strokeWidth=".6" /><path d="M8 8h15v13H8z" fill="#bdbdbd" /></svg>
                </TaskbarApp>
                <TaskbarApp label="Spotify" dot><span className="rounded-full bg-black"><FaSpotify className="size-[30px] text-[#1fd45a]" /></span></TaskbarApp>
                <TaskbarApp label="Microsoft Edge" active>
                    <svg width="31" height="31" viewBox="0 0 31 31" aria-hidden="true">
                        <defs>
                            <linearGradient id="edge" x1="0" y1="0" x2="1" y2="1"><stop offset="0" stopColor="#2aa9e8" /><stop offset=".5" stopColor="#36c3c8" /><stop offset="1" stopColor="#63d64a" /></linearGradient>
                        </defs>
                        <circle cx="15.500" cy="15.500" r="15" fill="#1260b4" />
                        <path d="M.7 14C2 5 8 .5 15.500.5 25 .5 30.500 7 30.500 13c0 5-4 7.500-8 7-3-.3-3.500-2-2-3.500 1.500-2-1-6.500-7-6.500C7 10 2 12 .7 14z" fill="url(#edge)" />
                        <path d="M10 17c0-2.500 1.500-4 4-5 3.500-.500 6.500 2 6.500 4.500-2 2-.5 4 3 4.500 2 0 4-.8 5.500-2-2 5-5 6-8 6-6 0-11-3-11-8z" fill="#dff0fb" />
                        <path d="M10 17c0 5 5 9 11 9 2.500 0 5-1 7-3-2.500 5-7 7.500-12.500 7.500C9 30.500 8 22 10 17z" fill="#0c3f8c" />
                    </svg>
                </TaskbarApp>
                <TaskbarApp label="File Explorer" dot>
                    <svg width="31" height="29" viewBox="0 0 31 29" aria-hidden="true"><path d="M0 2q0-2 2-2h8l4 4h15q2 0 2 2v8H0z" fill="#e79a1c" /><path d="M0 8h29q2 0 2 2v17H2q-2 0-2-2z" fill="#fdc44d" /><path d="M6 20h19v8H6z" fill="#1577c8" /><path d="M10 23h11v2H10z" fill="#0d4f90" /></svg>
                </TaskbarApp>
                <TaskbarApp label="Microsoft Store">
                    <svg width="30" height="30" viewBox="0 0 30 30" aria-hidden="true"><path d="M8 7V2q0-1 1-1h12q1 0 1 1v5" fill="none" stroke="#25b3ee" strokeWidth="2.500" /><path d="M0 6h30v19q0 4-4 4H4q-4 0-4-4z" fill="#204f8f" /><path d="M9 11h5.500v5.500H9z" fill="#f0522c" /><path d="M15.500 11H21v5.500h-5.500z" fill="#80bb2a" /><path d="M9 17.500h5.500V23H9z" fill="#2aa6e8" /><path d="M15.500 17.500H21V23h-5.500z" fill="#f7ba1e" /></svg>
                </TaskbarApp>
                <TaskbarApp label="Google Chrome" dot>
                    <svg width="37" height="37" viewBox="0 0 37 37" className="mb-1.5" aria-hidden="true">
                        <circle cx="16" cy="21" r="15" fill="#f8bc24" />
                        <path d="M16 21 3 13.500A15 15 0 0 1 29 13.500L16 14z" fill="#d93a2d" />
                        <path d="M3 13.500 16 36a15 15 0 0 1-13-22.500zM10 24.500 16 36l6-11.500z" fill="#249149" />
                        <circle cx="16" cy="21" r="7.500" fill="#fff" /><circle cx="16" cy="21" r="5.800" fill="#3b82e8" />
                        <circle cx="27" cy="9" r="9" fill="#55575a" /><circle cx="25" cy="6" r="4" fill="#a0a3a6" /><circle cx="31" cy="11" r="3" fill="#333" />
                    </svg>
                </TaskbarApp>
                <TaskbarApp label="Installer">
                    <svg width="30" height="30" viewBox="0 0 30 30" aria-hidden="true"><path d="M8 7V2q0-1 1-1h12q1 0 1 1v5" fill="none" stroke="#25b3ee" strokeWidth="2.500" /><path d="M0 6h30v19q0 4-4 4H4q-4 0-4-4z" fill="#204f8f" /><path d="M13 9h4v9h5l-7 8-7-8h5z" fill="#fff" /></svg>
                </TaskbarApp>
                <TaskbarApp label="L app"><span className="flex size-[30px] items-center justify-center bg-[#1b4aa4] text-[22px] font-bold text-white">L</span></TaskbarApp>
                <TaskbarApp label="Facebook"><span className="rounded-full bg-white"><FaFacebook className="size-[30px] text-[#0f84f2]" /></span></TaskbarApp>
                <TaskbarApp label="WhatsApp" dot>
                    <FaWhatsapp className="size-[31px] text-[#219653]" />
                    <span className="absolute right-1 top-0.5 flex size-[19px] items-center justify-center rounded-full bg-[#0b7cd4] text-[11px] text-white">0</span>
                </TaskbarApp>
                <TaskbarApp label="ChatGPT" dot><SiOpenai className="size-[29px]" /></TaskbarApp>
                <TaskbarApp label="Photos" dot>
                    <svg width="27" height="27" viewBox="0 0 27 27" aria-hidden="true"><rect width="27" height="27" rx="4" fill="#2d66b5" /><path d="m0 23 11-12q2-2 4 0l12 14q-1 2-4 2H4q-4 0-4-4z" fill="#35c0f0" /><path d="m5 27 8-8 8 8z" fill="#0e7fd2" /><circle cx="20" cy="5" r="2.500" fill="#fff" /></svg>
                </TaskbarApp>
            </div>
            <div className="flex flex-1 items-center justify-end pr-6">
                <ChevronUp size={20} strokeWidth={1.600} />
                <SiOpenai className="ml-5 size-5" />
                <Line size={24} width={1.500} className="ml-[18px]">
                    <path d="M3 9.500A9.500 9.500 0 0 1 21 8M21.500 2.500V8H16M10 21.500c-3-.5-5.500-2.500-6.500-5.500M3 21v-5.500h5.500" />
                    <circle cx="18" cy="18" r="5" fill="#f5a623" stroke="none" />
                </Line>
                <Keyboard size={23} strokeWidth={1.500} className="ml-4" />
                <span className="ml-9 text-[14px]">ع</span>
                <Wifi size={21} strokeWidth={1.800} className="ml-8" />
                <Volume2 size={20} strokeWidth={1.500} className="ml-2" />
                <Line size={22} width={2} className="ml-2.5">
                    <path d="M8 7h11v6M3 12v6h8" />
                    <path d="M21 9v2" />
                    <path d="M7 16l5-7h5l-3 7z" fill="currentColor" />
                    <path d="M5.500 1 2.500 6.500h3L4 11" />
                    <path d="m18 23-4-4c0-3 3-3 4-1 1-2 4-2 4 1z" fill="currentColor" />
                </Line>
                <div className="ml-[18px] text-[13px] leading-[20px]">
                    <p dir="rtl">٠٦:٠٥ م</p>
                    <p>٢٠٢٥/١٠/٢٩</p>
                </div>
            </div>
            <p className="pointer-events-none absolute left-1/2 -top-8 -ml-[108px] font-['DejaVu_Sans',sans-serif] text-[60px] font-bold leading-[80px] text-[#999]/25" aria-hidden="true">خمسات</p>
        </footer>
    );
}

export default function App() {
    return (
        <div className={`flex h-screen flex-col overflow-hidden bg-[#f7f7f7] ${appFont}`}>
            <BrowserBar />
            <div className="mx-[5px] mb-1 flex min-h-0 flex-1 flex-col overflow-hidden rounded-xl bg-gradient-to-r from-[#e4eff9] to-[#e8f6ef] shadow-[0_0_2px_rgba(0,0,0,0.3)]">
                <div className="flex min-h-0 flex-1 shadow-[0_1px_3px_rgba(0,0,0,0.35)]">
                    <ProductNav />
                    <DarkRail />
                    <CampaignTree />
                    <main className="flex min-w-0 flex-1 flex-col">
                        <EditorHeader />
                        <div className="flex min-h-0 flex-1 bg-[radial-gradient(ellipse_500px_450px_at_0%_0%,#fcf0ee,transparent),radial-gradient(ellipse_500px_350px_at_55%_0%,#e6e2f4,transparent),linear-gradient(165deg,#f0e9f0,#dfebf7_45%,#e3f3f0)]">
                            <div className="flex min-w-0 flex-1 justify-center gap-5 overflow-hidden">
                                <div className="w-[750px] min-w-0">
                                    <div className="mb-[15px] h-[9px] rounded-b-md bg-white" />
                                    <DetailsCard />
                                </div>
                                <ScoreCard />
                            </div>
                            <div className="flex w-[19px] shrink-0 flex-col items-center bg-[#fafcfd] py-2.5" aria-hidden="true">
                                <svg width="13" height="10" viewBox="0 0 13 10"><path d="M6.500 0 13 10H0z" fill="#8b8b8b" /></svg>
                                <span className="mt-[49px] h-[194px] w-[11px] rounded-full bg-[#8b8b8b]" />
                                <svg width="13" height="10" viewBox="0 0 13 10" className="mt-auto"><path d="M6.500 10 13 0H0z" fill="#8b8b8b" /></svg>
                            </div>
                        </div>
                        <EditorFooter />
                    </main>
                </div>
                <div className="h-[42px] shrink-0" />
            </div>
            <Taskbar />
        </div>
    );
}
